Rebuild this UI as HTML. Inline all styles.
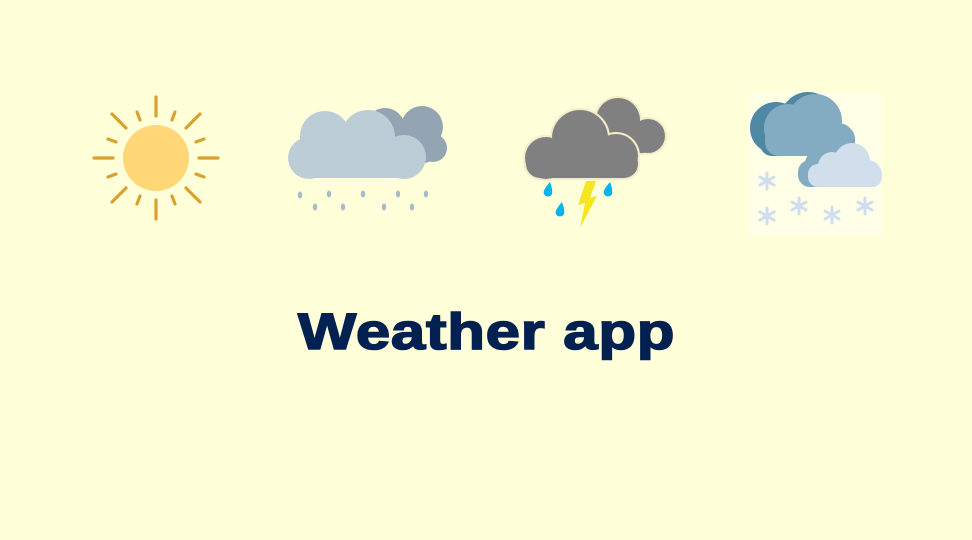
<!DOCTYPE html>
<html><head><meta charset="utf-8"><style>
html,body{margin:0;padding:0;width:972px;height:540px;background:#ffffd9;overflow:hidden}
svg{position:absolute;left:0;top:0}
h1{position:absolute;left:298px;top:306px;margin:0;font:bold 51px/1 "Liberation Sans",sans-serif;color:#022150;transform-origin:0 0;transform:scaleX(1.21);white-space:nowrap;letter-spacing:0.6px;-webkit-text-stroke:1.6px #022150}
</style></head><body>
<svg width="972" height="540" viewBox="0 0 972 540">
<!-- Sun -->
<g stroke="#daa12d" stroke-width="3.2" stroke-linecap="round">
<line x1="156" y1="97" x2="156" y2="116"/><line x1="156" y1="200" x2="156" y2="219"/>
<line x1="94" y1="158" x2="113" y2="158"/><line x1="199" y1="158" x2="218" y2="158"/>
<line x1="112" y1="114" x2="126" y2="128"/><line x1="186" y1="188" x2="200" y2="202"/>
<line x1="200" y1="114" x2="186" y2="128"/><line x1="126" y1="188" x2="112" y2="202"/>
<line x1="137" y1="112" x2="140" y2="120"/><line x1="175" y1="112" x2="172" y2="120"/>
<line x1="137" y1="204" x2="140" y2="196"/><line x1="175" y1="204" x2="172" y2="196"/>
<line x1="108" y1="139" x2="116" y2="142"/><line x1="108" y1="177" x2="116" y2="174"/>
<line x1="204" y1="139" x2="196" y2="142"/><line x1="204" y1="177" x2="196" y2="174"/>
</g>
<circle cx="156" cy="158" r="33" fill="#ffd776"/>
<!-- Rain cloud -->
<g fill="#93a4b2">
<circle cx="385" cy="128" r="20"/><circle cx="422" cy="127" r="21"/><circle cx="433" cy="148" r="14"/><rect x="372" y="130" width="62" height="33" rx="10"/>
</g>
<g fill="#bccdd8">
<circle cx="325" cy="136" r="25"/><circle cx="368" cy="137" r="27"/><circle cx="309" cy="158" r="21"/><circle cx="404" cy="157" r="22"/><rect x="295" y="145" width="120" height="33" rx="16"/>
</g>
<g fill="#a7bbc9">
<ellipse cx="300" cy="195" rx="2.2" ry="3.5"/><ellipse cx="329" cy="194" rx="2.2" ry="3.5"/><ellipse cx="363" cy="194" rx="2.2" ry="3.5"/><ellipse cx="398" cy="194" rx="2.2" ry="3.5"/><ellipse cx="426" cy="194" rx="2.2" ry="3.5"/>
<ellipse cx="315" cy="207" rx="2.2" ry="3.5"/><ellipse cx="343" cy="207" rx="2.2" ry="3.5"/><ellipse cx="384" cy="207" rx="2.2" ry="3.5"/><ellipse cx="412" cy="207" rx="2.2" ry="3.5"/>
</g>
<!-- Storm cloud back -->
<g fill="#808080" stroke="#f3ecc8" stroke-width="4">
<circle cx="618" cy="120" r="22"/><circle cx="648" cy="136" r="17"/><circle cx="598" cy="131" r="17"/><rect x="590" y="128" width="60" height="25" rx="8"/>
</g>
<g fill="#808080">
<circle cx="618" cy="120" r="22"/><circle cx="648" cy="136" r="17"/><circle cx="598" cy="131" r="17"/><rect x="590" y="128" width="60" height="25" rx="8"/>
</g>
<!-- Storm cloud front -->
<g fill="#808080" stroke="#f3ecc8" stroke-width="4">
<circle cx="546" cy="158" r="21"/><circle cx="580" cy="138" r="28"/><circle cx="616" cy="156" r="22"/><rect x="526" y="150" width="112" height="28" rx="14"/>
</g>
<g fill="#808080">
<circle cx="546" cy="158" r="21"/><circle cx="580" cy="138" r="28"/><circle cx="616" cy="156" r="22"/><rect x="526" y="150" width="112" height="28" rx="14"/>
</g>
<g fill="#00b4f0">
<path d="M550 182 q-8 9-6 12 a4.5 4.5 0 0 0 8 0 q1-4-2-12z"/>
<path d="M562 202 q-8 9-6 12 a4.5 4.5 0 0 0 8 0 q1-4-2-12z"/>
<path d="M610 182 q-8 9-6 12 a4.5 4.5 0 0 0 8 0 q1-4-2-12z"/>
</g>
<path d="M586 181 L596 181 L590 198 L597 196 L580 228 L585 203 L578 205 z" fill="#f6e620"/>
<!-- Snow -->
<rect x="748" y="92" width="134" height="143" fill="#fffff0" opacity="0.6"/>
<g fill="#4f88a5"><circle cx="776" cy="128" r="26"/><circle cx="808" cy="120" r="28"/><rect x="760" y="125" width="80" height="31" rx="12"/></g>
<g fill="#83abc2"><circle cx="788" cy="128" r="24"/><circle cx="815" cy="121" r="27"/><circle cx="838" cy="140" r="17"/><rect x="765" y="125" width="90" height="31" rx="14"/></g>
<g fill="#83abc2"><circle cx="820" cy="164" r="15"/><rect x="798" y="160" width="40" height="27" rx="12"/></g>
<g fill="#d1dfec"><circle cx="832" cy="166" r="14"/><circle cx="852" cy="161" r="18"/><circle cx="868" cy="173" r="13"/><rect x="808" y="164" width="74" height="23" rx="10"/></g>
<g stroke="#d0dcef" stroke-width="3" stroke-linecap="round">
<g transform="translate(767,181)"><line x1="0" y1="-8" x2="0" y2="8"/><line x1="-7" y1="-4" x2="7" y2="4"/><line x1="-7" y1="4" x2="7" y2="-4"/></g>
<g transform="translate(767,216)"><line x1="0" y1="-8" x2="0" y2="8"/><line x1="-7" y1="-4" x2="7" y2="4"/><line x1="-7" y1="4" x2="7" y2="-4"/></g>
<g transform="translate(799,206)"><line x1="0" y1="-8" x2="0" y2="8"/><line x1="-7" y1="-4" x2="7" y2="4"/><line x1="-7" y1="4" x2="7" y2="-4"/></g>
<g transform="translate(832,215)"><line x1="0" y1="-8" x2="0" y2="8"/><line x1="-7" y1="-4" x2="7" y2="4"/><line x1="-7" y1="4" x2="7" y2="-4"/></g>
<g transform="translate(865,206)"><line x1="0" y1="-8" x2="0" y2="8"/><line x1="-7" y1="-4" x2="7" y2="4"/><line x1="-7" y1="4" x2="7" y2="-4"/></g>
</g>
</svg>
<h1>Weather app</h1>
</body></html>
